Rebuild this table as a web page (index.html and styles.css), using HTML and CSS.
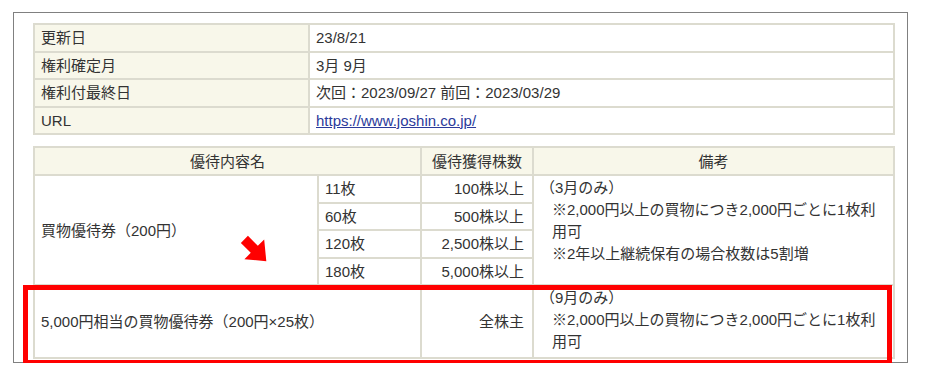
FILE: index.html
```html
<!DOCTYPE html>
<html lang="ja">
<head>
<meta charset="utf-8">
<link rel="stylesheet" href="styles.css">
</head>
<body>
<div class="box">
  <table class="info">
    <colgroup><col class="c-label"><col></colgroup>
    <tr><th>更新日</th><td>23/8/21</td></tr>
    <tr><th>権利確定月</th><td>3月 9月</td></tr>
    <tr><th>権利付最終日</th><td>次回：2023/09/27 前回：2023/03/29</td></tr>
    <tr><th>URL</th><td><a href="#">https://www.joshin.co.jp/</a></td></tr>
  </table>

  <table class="yutai">
    <colgroup><col class="c1"><col class="c2"><col class="c3"><col class="c4"></colgroup>
    <tr class="head"><th colspan="2">優待内容名</th><th>優待獲得株数</th><th>備考</th></tr>
    <tr><td rowspan="4">買物優待券（200円）</td><td>11枚</td><td class="num">100株以上</td>
      <td rowspan="4" class="note">（3月のみ）<div class="ind">※2,000円以上の買物につき2,000円ごとに1枚利用可</div><div class="ind">※2年以上継続保有の場合枚数は5割増</div></td></tr>
    <tr><td>60枚</td><td class="num">500株以上</td></tr>
    <tr><td>120枚</td><td class="num">2,500株以上</td></tr>
    <tr><td>180枚</td><td class="num">5,000株以上</td></tr>
    <tr class="last"><td colspan="2">5,000円相当の買物優待券（200円×25枚）</td><td class="num">全株主</td>
      <td class="note">（9月のみ）<div class="ind">※2,000円以上の買物につき2,000円ごとに1枚利用可</div></td></tr>
  </table>

  <div class="highlight"></div>
  <svg class="arrow" width="36" height="36" viewBox="0 0 36 36">
    <polygon points="3,13 17,13 17,4 34,18 17,32 17,23 3,23" fill="#ff0000" transform="rotate(45 18 18)"/>
  </svg>
</div>
</body>
</html>
```

FILE: styles.css
```css
html, body {
  margin: 0;
  padding: 0;
  background: #ffffff;
}
body {
  padding: 12px 0 0 13px;
  font-family: "Liberation Sans", "Noto Sans CJK JP", sans-serif;
  font-size: 15px;
  color: #333333;
}
.box {
  position: relative;
  box-sizing: border-box;
  width: 895px;
  border: 1px solid #808080;
  padding: 10px 0 3px 19px;
}
table {
  border-collapse: collapse;
  table-layout: fixed;
  width: 862px;
}
th, td {
  box-sizing: border-box;
  height: 27.5px;
  border: 2px solid #dcdbcf;
  padding: 0 6px;
  line-height: 19px;
  text-align: left;
  font-weight: normal;
  white-space: nowrap;
}
.info th {
  background: #f8f7ea;
}
.info .c-label { width: 275px; }
.info a {
  color: #2b3a9b;
  text-decoration: underline;
}
.yutai {
  margin-top: 11px;
}
.yutai .c1 { width: 284px; }
.yutai .c2 { width: 103px; }
.yutai .c3 { width: 112px; }
.yutai .head th {
  height: 28px;
  background: #f8f7ea;
  text-align: center;
}
.yutai .num {
  text-align: right;
  padding-right: 8px;
}
.yutai .note {
  white-space: normal;
  vertical-align: top;
  line-height: 22px;
  padding: 1px 6px 0 6px;
}
.yutai .ind {
  padding-left: 12px;
}
.yutai .last td {
  height: 73px;
}
.highlight {
  position: absolute;
  left: 9px;
  top: 272px;
  width: 859px;
  height: 70px;
  border: 5px solid #ff0000;
  pointer-events: none;
}
.arrow {
  position: absolute;
  left: 223px;
  top: 219px;
}
```
